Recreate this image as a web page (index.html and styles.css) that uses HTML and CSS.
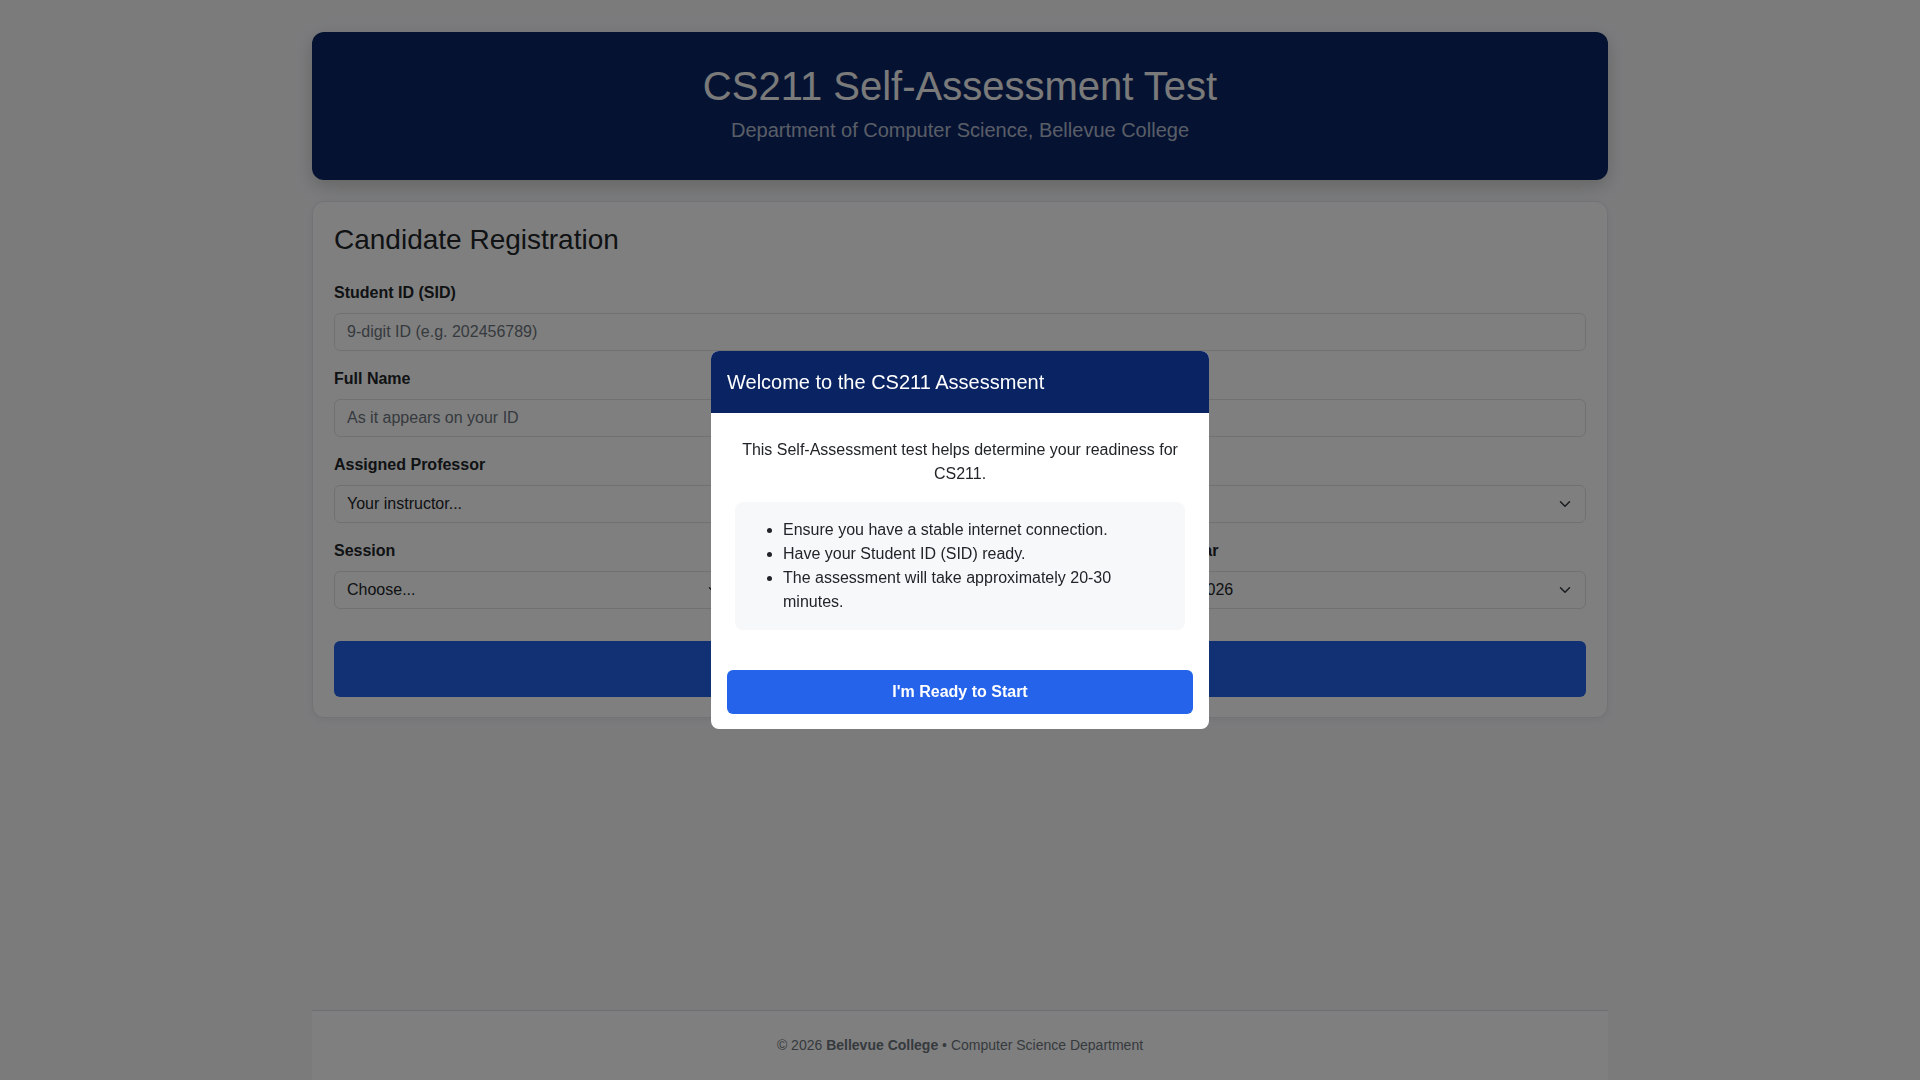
FILE: index.html
```html
<!DOCTYPE html>
<html lang="en">
<head>
<meta charset="utf-8">
<title>CS211 Self-Assessment Test</title>
<link rel="stylesheet" href="styles.css">
</head>
<body>
<div class="page">
  <main class="container">
    <header class="hero">
      <h1 class="hero-title">CS211 Self-Assessment Test</h1>
      <p class="hero-sub">Department of Computer Science, Bellevue College</p>
    </header>

    <section class="card">
      <h2 class="card-title">Candidate Registration</h2>

      <div class="field">
        <label class="label">Student ID (SID)</label>
        <input class="input" type="text" placeholder="9-digit ID (e.g. 202456789)">
      </div>

      <div class="field">
        <label class="label">Full Name</label>
        <input class="input" type="text" placeholder="As it appears on your ID">
      </div>

      <div class="field">
        <label class="label">Assigned Professor</label>
        <div class="select">
          <span>Your instructor...</span>
          <svg class="chev" width="16" height="12" viewBox="0 0 16 16"><path d="m2 5 6 6 6-6" fill="none" stroke="#343a40" stroke-width="2" stroke-linecap="round" stroke-linejoin="round"/></svg>
        </div>
      </div>

      <div class="field-row">
        <div class="field">
          <label class="label">Session</label>
          <div class="select">
            <span>Choose...</span>
            <svg class="chev" width="16" height="12" viewBox="0 0 16 16"><path d="m2 5 6 6 6-6" fill="none" stroke="#343a40" stroke-width="2" stroke-linecap="round" stroke-linejoin="round"/></svg>
          </div>
        </div>
        <div class="field">
          <label class="label">Quarter</label>
          <div class="select">
            <span>Choose...</span>
            <svg class="chev" width="16" height="12" viewBox="0 0 16 16"><path d="m2 5 6 6 6-6" fill="none" stroke="#343a40" stroke-width="2" stroke-linecap="round" stroke-linejoin="round"/></svg>
          </div>
        </div>
        <div class="field">
          <label class="label">Year</label>
          <div class="select">
            <span>2026</span>
            <svg class="chev" width="16" height="12" viewBox="0 0 16 16"><path d="m2 5 6 6 6-6" fill="none" stroke="#343a40" stroke-width="2" stroke-linecap="round" stroke-linejoin="round"/></svg>
          </div>
        </div>
      </div>

      <button class="btn-submit" type="button">Begin Assessment</button>
    </section>
  </main>

  <footer class="footer">
    © 2026 <strong>Bellevue College</strong> • Computer Science Department
  </footer>
</div>

<div class="backdrop">
  <div class="modal">
    <div class="modal-header">
      <h5 class="modal-title">Welcome to the CS211 Assessment</h5>
    </div>
    <div class="modal-body">
      <p class="modal-lead">This Self-Assessment test helps determine your readiness for CS211.</p>
      <div class="info-box">
        <ul class="info-list">
          <li>Ensure you have a stable internet connection.</li>
          <li>Have your Student ID (SID) ready.</li>
          <li>The assessment will take approximately 20-30 minutes.</li>
        </ul>
      </div>
    </div>
    <div class="modal-footer">
      <button class="btn-start" type="button">I'm Ready to Start</button>
    </div>
  </div>
</div>
</body>
</html>
```

FILE: styles.css
```css
* { box-sizing: border-box; }

html, body {
  margin: 0;
  padding: 0;
}

body {
  font-family: "Liberation Sans", Arial, sans-serif;
  font-size: 16px;
  line-height: 1.5;
  color: #212529;
  background: #f6f7f9;
}

.page {
  min-height: 100vh;
  display: flex;
  flex-direction: column;
}

.container {
  width: 1296px;
  margin: 0 auto;
  padding-top: 32px;
}

/* Header banner */
.hero {
  background: #0a2463;
  border-radius: 12px;
  text-align: center;
  padding: 30px 24px 35px;
  box-shadow: 0 6px 18px rgba(0, 0, 0, 0.18);
}

.hero-title {
  margin: 0 0 5px;
  font-size: 40px;
  line-height: 1.2;
  font-weight: 400;
  color: #f4f4f4;
}

.hero-sub {
  margin: 0;
  font-size: 20px;
  line-height: 30px;
  color: rgba(255, 255, 255, 0.7);
}

/* Registration card */
.card {
  margin-top: 21px;
  background: #fff;
  border: 1px solid #e2e6ec;
  border-radius: 12px;
  padding: 21px 21px 20px;
  box-shadow: 0 2px 8px rgba(0, 0, 0, 0.06);
}

.card-title {
  margin: 0 0 24px;
  font-size: 28px;
  line-height: 1.2;
  font-weight: 400;
  color: #212529;
}

.field {
  margin-bottom: 16px;
}

.field-row {
  display: grid;
  grid-template-columns: repeat(3, 1fr);
  column-gap: 24px;
}

.label {
  display: block;
  margin-bottom: 8px;
  font-weight: 700;
  font-size: 16px;
  line-height: 24px;
  color: #212529;
}

.input {
  display: block;
  width: 100%;
  height: 38px;
  padding: 6px 12px;
  font-family: "Liberation Sans", Arial, sans-serif;
  font-size: 16px;
  line-height: 24px;
  color: #212529;
  background: #fff;
  border: 1px solid #dee2e6;
  border-radius: 6px;
  outline: none;
}

.input::placeholder {
  color: #6c757d;
  opacity: 1;
}

.select {
  display: flex;
  align-items: center;
  justify-content: space-between;
  height: 38px;
  padding: 6px 12px;
  font-size: 16px;
  line-height: 24px;
  color: #212529;
  background: #fff;
  border: 1px solid #dee2e6;
  border-radius: 6px;
}

.chev {
  flex: none;
  display: block;
}

.btn-submit {
  display: block;
  width: 100%;
  margin-top: 16px;
  padding: 16px 0;
  font-family: "Liberation Sans", Arial, sans-serif;
  font-size: 18px;
  line-height: 24px;
  font-weight: 700;
  color: #fff;
  background: #2563eb;
  border: 0;
  border-radius: 6px;
}

/* Footer */
.footer {
  width: 1296px;
  margin: auto auto 0;
  background: #fff;
  border-top: 1px solid #d9dee6;
  padding: 24px 0;
  text-align: center;
  font-size: 14px;
  line-height: 21px;
  color: #6c757d;
}

.footer strong {
  font-weight: 700;
}

/* Modal */
.backdrop {
  position: fixed;
  inset: 0;
  background: rgba(0, 0, 0, 0.5);
  display: flex;
  align-items: center;
  justify-content: center;
}

.modal {
  width: 498px;
  background: #fff;
  border-radius: 8px;
  overflow: hidden;
}

.modal-header {
  background: #0a2463;
  padding: 16px;
}

.modal-title {
  margin: 0;
  font-size: 20px;
  line-height: 30px;
  font-weight: 400;
  color: #fff;
}

.modal-body {
  padding: 25px 24px 24px;
  text-align: center;
}

.modal-lead {
  margin: 0 0 16px;
}

.info-box {
  background: #f7f8fa;
  border-radius: 8px;
  padding: 16px;
  text-align: left;
}

.info-list {
  margin: 0;
  padding-left: 32px;
}

.modal-footer {
  padding: 16px 16px 15px;
}

.btn-start {
  display: block;
  width: 100%;
  padding: 10px 16px;
  font-family: "Liberation Sans", Arial, sans-serif;
  font-size: 16px;
  line-height: 24px;
  font-weight: 700;
  color: #fff;
  background: #2563eb;
  border: 0;
  border-radius: 6px;
}
```
